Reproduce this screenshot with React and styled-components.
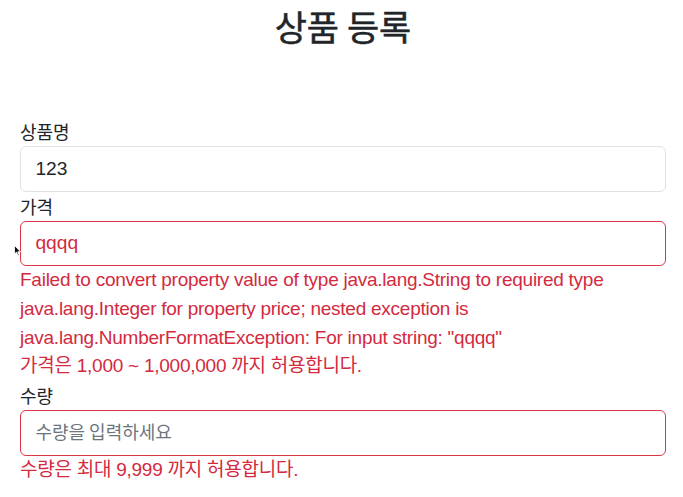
import React from "react";
import styled, { createGlobalStyle } from "styled-components";

const GlobalStyle = createGlobalStyle`
  html, body {
    margin: 0;
    padding: 0;
    background: #fff;
  }
  body {
    font-family: "Liberation Sans", "Noto Sans CJK KR", sans-serif;
    color: #212529;
    font-size: 19.2px;
    line-height: 1.5;
  }
  * { box-sizing: border-box; }
`;

const Container = styled.div`
  position: relative;
  padding: 3px 17px 0 20px;
`;

const Header = styled.div`
  text-align: center;
  margin-bottom: 68px;
`;

const Title = styled.h2`
  margin: 0;
  font-family: "Noto Sans CJK KR", sans-serif;
  font-weight: 400;
  font-size: 35px;
  line-height: 46px;
  color: #212529;
  -webkit-text-stroke: 0.5px #212529;
`;

const Label = styled.label`
  display: block;
  font-family: "Noto Sans CJK KR", sans-serif;
  font-size: 18px;
  line-height: 29px;
  height: 29px;
`;

const Input = styled.input`
  display: block;
  width: 100%;
  height: 45.5px;
  padding: 0 14.4px;
  font-family: "Liberation Sans", "Noto Sans CJK KR", sans-serif;
  font-size: 19.2px;
  color: ${(p) => (p.$error ? "#d32a40" : "#212529")};
  background: #fff;
  border: 1px solid ${(p) => (p.$error ? "#dc3545" : "#dee2e6")};
  border-radius: 6px;
  outline: none;

  &::placeholder {
    color: #6c757d;
    font-family: "Noto Sans CJK KR", sans-serif;
    font-size: 18px;
  }
`;

const FieldError = styled.div`
  color: #d32a40;
  font-size: 19px;
  letter-spacing: -0.25px;
  line-height: 28.8px;
`;

const Cursor = styled.svg`
  position: absolute;
  left: 14px;
  top: 245px;
`;

export default function App() {
  return (
    <>
      <GlobalStyle />
      <Container>
        <Header>
          <Title>상품 등록</Title>
        </Header>
        <form>
          <Label htmlFor="itemName">상품명</Label>
          <Input id="itemName" defaultValue="123" />

          <Label htmlFor="price">가격</Label>
          <Input id="price" $error defaultValue="qqqq" />
          <FieldError>
            Failed to convert property value of type java.lang.String to required type
            java.lang.Integer for property price; nested exception is
            java.lang.NumberFormatException: For input string: "qqqq"
          </FieldError>
          <FieldError>가격은 1,000 ~ 1,000,000 까지 허용합니다.</FieldError>

          <Label htmlFor="quantity">수량</Label>
          <Input id="quantity" $error placeholder="수량을 입력하세요" />
          <FieldError>수량은 최대 9,999 까지 허용합니다.</FieldError>
        </form>
        <Cursor width="7" height="11" viewBox="0 0 7 11">
          <path d="M0.5 0.5 L0.5 9 L2.5 7 L4 10.5 L5.2 10 L3.8 6.7 L6.5 6.7 Z" fill="#111" stroke="#fff" strokeWidth="0.8" />
        </Cursor>
      </Container>
    </>
  );
}
